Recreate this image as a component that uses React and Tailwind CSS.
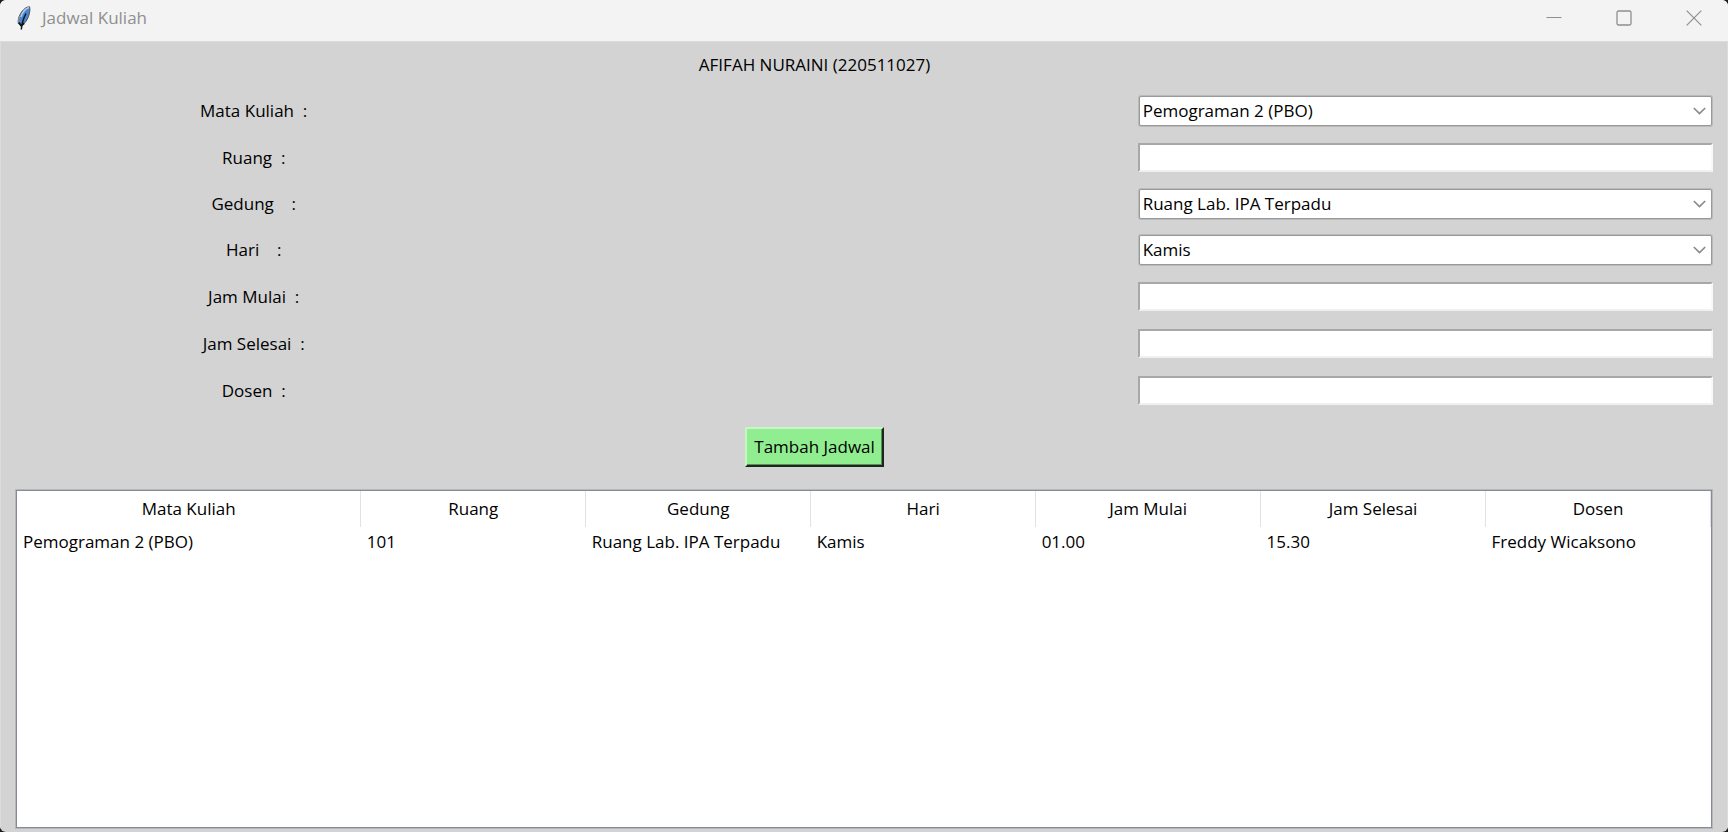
import { useState } from "react";

const fields = [
  { id: "mata-kuliah", label: "Mata Kuliah  :", options: ["Pemograman 2 (PBO)"] },
  { id: "ruang", label: "Ruang  :" },
  { id: "gedung", label: "Gedung    :", options: ["Ruang Lab. IPA Terpadu"] },
  { id: "hari", label: "Hari    :", options: ["Kamis", "Senin", "Selasa", "Rabu", "Jumat"] },
  { id: "jam-mulai", label: "Jam Mulai  :" },
  { id: "jam-selesai", label: "Jam Selesai  :" },
  { id: "dosen", label: "Dosen  :" },
];

const columns = ["Mata Kuliah", "Ruang", "Gedung", "Hari", "Jam Mulai", "Jam Selesai", "Dosen"];

const initialRows = [
  ["Pemograman 2 (PBO)", "101", "Ruang Lab. IPA Terpadu", "Kamis", "01.00", "15.30", "Freddy Wicaksono"],
];

function FeatherIcon() {
  return (
    <svg width="14" height="24" viewBox="0 0 14 24" aria-hidden="true">
      <path d="M12.600.8C9.500.6 6 3.500 3.600 7.500 1.500 11 .8 14.500 1.300 17.500L4 19.500C7.500 18 10 14.500 11.500 10.500 12.700 7 13.300 3.300 12.600.8Z" fill="#4a86d0" stroke="#4a525c" strokeWidth="1" />
      <path d="M12 1.500C8.500 2.500 5.200 7 3.800 11" fill="none" stroke="#b4cbe6" strokeWidth="1.500" />
      <path d="M2.600 9.800c-1 2.500-1.200 5-.8 7.200" fill="none" stroke="#8d9196" strokeWidth="1.200" />
      <path d="M9 7.500C6.800 11.500 5 15.500 4.300 23.500" fill="none" stroke="#101418" strokeWidth="1.500" />
      <path d="M1.800 16.500l2.400 3.300 3-2.500" fill="none" stroke="#101418" strokeWidth="1.800" />
    </svg>
  );
}

function TitleBar() {
  return (
    <header className="flex h-[41px] items-start justify-between bg-[#f3f3f3] text-[#8f8f8f]">
      <div className="flex h-[35px] items-center gap-[11px] pl-[17px]">
        <FeatherIcon />
        <h1 className="text-[17px] leading-6">Jadwal Kuliah</h1>
      </div>
      <div className="flex h-[35px]">
        <button type="button" aria-label="Minimize" className="flex w-[68px] items-center justify-center">
          <svg width="16" height="16" viewBox="0 0 16 16"><path d="M.5 7.500h15" stroke="#8f8f8f" fill="none" /></svg>
        </button>
        <button type="button" aria-label="Maximize" className="flex w-[72px] items-center justify-center">
          <svg width="16" height="16" viewBox="0 0 16 16"><rect x="1" y="1" width="14" height="14" rx="1.500" stroke="#8f8f8f" strokeWidth="1.300" fill="none" /></svg>
        </button>
        <button type="button" aria-label="Close" className="flex w-[68px] items-center justify-center">
          <svg width="16" height="16" viewBox="0 0 16 16"><path d="M.7.7l14.600 14.600M15.300.7L.7 15.300" stroke="#8f8f8f" strokeWidth="1.200" fill="none" /></svg>
        </button>
      </div>
    </header>
  );
}

function Combobox({ id, options }) {
  return (
    <div className="mx-px my-[8px] grid">
      <select
        id={id}
        className="col-start-1 row-start-1 h-[30px] w-full appearance-none rounded-[2px] border border-[#999999] bg-white pl-[3px] pr-8 leading-6 text-black shadow-[0_0_0_1px_#bababa] outline-none"
      >
        {options.map((o) => (
          <option key={o}>{o}</option>
        ))}
      </select>
      <svg className="pointer-events-none col-start-1 row-start-1 mr-[6px] self-center justify-self-end" width="13" height="8" viewBox="0 0 13 8" aria-hidden="true">
        <path d="M.8 1l5.700 5.500L12.200 1" fill="none" stroke="#8a8a8a" strokeWidth="1.700" />
      </svg>
    </div>
  );
}

function Entry({ id }) {
  return (
    <input
      id={id}
      type="text"
      className="my-[9px] h-[29px] w-full border-2 border-t-[#a8a8a8] border-r-[#f8f8f8] border-b-[#f0f0f0] border-l-[#a8a8a8] bg-white px-[3px] outline-none"
    />
  );
}

export default function App() {
  const [rows] = useState(initialRows);

  return (
    <div className="min-h-screen bg-[#1c1c1c]">
      <div className="flex min-h-screen flex-col overflow-hidden rounded-[6px] bg-[#d3d3d3] font-['Open_Sans',sans-serif] text-[17px] leading-6 text-black">
        <TitleBar />
        <main className="flex flex-1 flex-col border-x border-t border-[#dcdcdc] pb-[4px]">
          <form onSubmit={(e) => e.preventDefault()}>
            <div className="grid grid-cols-[506fr_617fr_605fr] items-center">
              <p className="col-start-2 py-[11px] text-center">AFIFAH NURAINI (220511027)</p>
              {fields.map((f) => (
                <div key={f.id} className="col-span-3 grid grid-cols-subgrid items-center">
                  <label htmlFor={f.id} className="justify-self-center whitespace-pre">{f.label}</label>
                  <div className="col-start-3 pr-[14px] pl-[15px]">
                    {f.options ? <Combobox id={f.id} options={f.options} /> : <Entry id={f.id} />}
                  </div>
                </div>
              ))}
              <button
                type="submit"
                className="col-start-2 mt-[13px] mb-[23px] justify-self-center border-2 border-t-[#c6f6c6] border-r-[#1c261c] border-b-[#1c261c] border-l-[#c6f6c6] bg-[#90ee90] px-[7px] py-[6px] shadow-[inset_-1px_-1px_0_#569056]"
              >
                Tambah Jadwal
              </button>
            </div>
          </form>
          <div className="mx-[15px] flex-1 border border-[#868c95] bg-white shadow-[0_0_0_1px_#b4b8bd]">
            <table className="w-full table-fixed border-collapse">
              <colgroup>
                <col className="w-[20.3%]" />
              </colgroup>
              <thead>
                <tr>
                  {columns.map((c) => (
                    <th key={c} scope="col" className="h-[36px] border-r border-[#e2e2e2] text-center font-normal">{c}</th>
                  ))}
                </tr>
              </thead>
              <tbody>
                {rows.map((row, i) => (
                  <tr key={i}>
                    {row.map((cell, j) => (
                      <td key={j} className="h-[30px] truncate pl-[6px]">{cell}</td>
                    ))}
                  </tr>
                ))}
              </tbody>
            </table>
          </div>
        </main>
      </div>
    </div>
  );
}
